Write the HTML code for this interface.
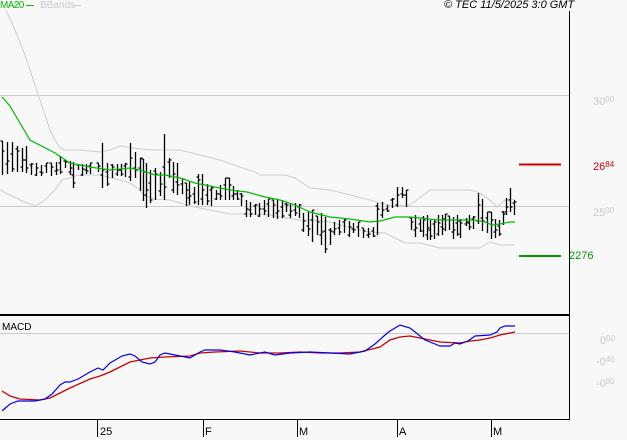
<!DOCTYPE html>
<html><head><meta charset="utf-8"><style>
html,body{margin:0;padding:0;background:#f8f8f8;}
body{width:627px;height:440px;position:relative;overflow:hidden;font-family:"Liberation Sans",sans-serif;}
.t{position:absolute;font-size:11px;line-height:11px;white-space:nowrap;}
.g{color:#c8c8c8;}
.s{font-size:8px;vertical-align:3px;}
</style></head><body>
<svg width="627" height="440" style="position:absolute;left:0;top:0" xmlns="http://www.w3.org/2000/svg">
<g stroke="#cccccc" stroke-width="1" fill="none">
<line x1="0" y1="95.5" x2="569" y2="95.5"/>
<line x1="0" y1="206.5" x2="569" y2="206.5"/>
<line x1="0" y1="333.5" x2="569" y2="333.5"/>
<polyline points="6,10 15,30 25,55 30,70 35,85 40,100 45,115 50,130 55,140 60,148 65,150 80,150 100,152 110,150 120,146 140,149 155,150 165,150 180,150 200,155 220,160 240,167 255,172 260,175 270,175 285,175 295,178 310,188 330,190 350,195 370,200 380,203 395,206 410,205 430,190 440,190 470,190 480,193 490,200 497,207 505,200 515,199"/>
<polyline points="0,190 10,195 20,200 35,206 45,200 55,190 62,180 70,178 75,176 80,175 100,175 120,180 130,183 140,190 145,196 155,199 170,200 190,206 210,210 230,214 255,214 270,215 285,218 300,220 310,220 330,222 340,225 360,230 370,232 385,233 395,238 405,243 420,243 440,248 460,248 480,248 490,242 500,245 515,245"/>
</g>
<path id="bars" stroke="#000" stroke-width="1.3" fill="none"/>
<polyline fill="none" stroke="#00bb00" stroke-width="1.2" points="2,97 10,106 17,118 30,140 55,153 70,163 90,167 110,170 130,168 140,170 155,175 165,175 180,178 195,183 210,186 230,190 247,192 265,197 280,200 295,205 310,212 330,217 350,219 370,222 380,221 395,217 410,217 420,218 438,220 460,220 475,220 485,222 492,225 500,224 510,222 515,222"/>
<line x1="519" y1="164.5" x2="561" y2="164.5" stroke="#cc0000" stroke-width="2"/>
<line x1="519" y1="256" x2="561" y2="256" stroke="#009900" stroke-width="2"/>
<polyline fill="none" stroke="#cc0000" stroke-width="1.3" points="2,391 10,396 20,399 40,400 50,398 60,393 70,388 90,379 100,376 110,372 130,362 140,360 150,358 165,357 190,356 200,353 215,352 240,351 260,353 280,353 300,352 320,353 340,353 360,352 380,347 390,340 400,337 410,336 420,338 440,342 460,343 470,341 480,340 490,338 500,335 515,332"/>
<polyline fill="none" stroke="#0000ee" stroke-width="1.2" points="2,411 10,404 18,401 35,401 45,399 52,394 60,385 65,382 70,382 78,379 90,372 98,368 103,370 110,363 122,356 130,354 135,356 142,362 150,364 155,362 160,355 165,353 175,355 190,358 200,352 205,350 220,350 235,352 250,355 265,352 275,355 290,353 310,352 330,353 350,354 365,351 375,344 385,335 390,331 400,325 410,328 415,332 425,340 435,344 440,346 450,346 455,343 460,344 468,341 475,336 490,335 497,332 500,328 505,326 515,326"/>
<g stroke="#000" fill="none">
<line x1="569.5" y1="11" x2="569.5" y2="420" stroke-width="1"/>
<line x1="0" y1="315" x2="569" y2="315" stroke-width="2"/>
<line x1="0" y1="419.5" x2="570" y2="419.5" stroke-width="1"/>
<line x1="97.5" y1="419" x2="97.5" y2="437"/>
<line x1="203.5" y1="419" x2="203.5" y2="437"/>
<line x1="297.5" y1="419" x2="297.5" y2="437"/>
<line x1="397.5" y1="419" x2="397.5" y2="437"/>
<line x1="491.5" y1="419" x2="491.5" y2="437"/>
</g>
<line x1="26" y1="5.5" x2="34" y2="5.5" stroke="#00bb00"/>
<line x1="72" y1="5.5" x2="81" y2="5.5" stroke="#cccccc"/>
</svg>
<script>
var b=[[2,141,175],[7,142,174],[12,142,172],[17,146,172],[22,148,172],[26,146,173],[31,163,175],[36,163,176],[41,165,176],[46,163,173],[51,163,176],[56,162,175],[60,156,174],[65,160,168],[70,161,175],[73,162,188],[78,164,170],[82,164,176],[86,164,174],[90,163,174],[98,163,172],[102,143,188],[107,163,186],[112,164,178],[117,164,176],[121,164,176],[125,163,177],[130,143,181],[135,152,178],[140,158,191],[143,159,201],[146,163,208],[150,170,203],[155,168,200],[160,172,196],[164,134,200],[169,158,178],[173,162,193],[177,163,195],[182,179,194],[186,183,206],[189,182,205],[194,187,204],[198,174,205],[202,174,205],[207,184,205],[211,186,206],[216,190,200],[220,185,200],[225,178,200],[229,178,200],[233,186,200],[237,190,200],[241,193,206],[246,200,217],[250,202,217],[255,204,215],[259,203,217],[264,200,215],[268,199,217],[273,200,218],[277,200,219],[282,200,218],[286,203,212],[290,204,218],[295,203,216],[299,204,218],[303,213,232],[308,211,236],[312,210,242],[317,216,235],[321,213,245],[325,217,253],[330,228,245],[334,222,235],[339,220,235],[344,219,233],[349,221,237],[353,223,233],[358,222,237],[363,228,238],[368,228,238],[373,227,237],[377,203,235],[382,202,218],[387,205,212],[392,198,208],[397,187,207],[402,187,198],[406,190,207],[411,218,230],[415,215,237],[420,219,232],[423,216,237],[427,215,240],[430,220,240],[434,220,239],[438,215,236],[442,215,235],[445,214,231],[449,216,230],[453,217,239],[457,215,236],[460,219,238],[466,218,226],[469,215,230],[473,216,229],[478,193,224],[482,199,231],[487,212,233],[491,212,239],[495,219,238],[499,220,236],[503,211,225],[506,198,215],[510,188,212],[514,200,215]];
var d="";for(var i=0;i<b.length;i++){var x=b[i][0]+.5,h=b[i][1],l=b[i][2],o=Math.round(h+(l-h)*((i*37)%10)/10),c=Math.round(h+(l-h)*((i*53+3)%10)/10);d+="M"+x+" "+h+"V"+l+"M"+(x-2)+" "+o+"H"+x+"M"+x+" "+c+"H"+(x+2);}
document.getElementById("bars").setAttribute("d",d);
</script>
<div class="t" style="left:0px;top:0px;color:#00bb00;font-size:10px;letter-spacing:-0.6px;">MA20</div>
<div class="t" style="left:40px;top:0px;color:#c8c8c8;font-size:10px;">BBands</div>
<div class="t" style="left:444px;top:0px;font-style:italic;font-size:11px;">© TEC 11/5/2025 3:0 GMT</div>
<div class="t g" style="left:593px;top:94px;">30<span class="s">00</span></div>
<div class="t" style="left:593px;top:159px;color:#cc0000;">26<span class="s">84</span></div>
<div class="t g" style="left:593px;top:205px;">25<span class="s">00</span></div>
<div class="t" style="left:569px;top:251px;color:#009900;">2276</div>
<div class="t" style="left:2px;top:322px;font-size:10px;">MACD</div>
<div class="t g" style="left:600px;top:333px;">0<span class="s">00</span></div>
<div class="t g" style="left:596px;top:354px;">-0<span class="s">40</span></div>
<div class="t g" style="left:596px;top:376px;">-0<span class="s">80</span></div>
<div class="t" style="left:100px;top:427px;">25</div>
<div class="t" style="left:205px;top:427px;">F</div>
<div class="t" style="left:299px;top:427px;">M</div>
<div class="t" style="left:399px;top:427px;">A</div>
<div class="t" style="left:493px;top:427px;">M</div>
</body></html>
